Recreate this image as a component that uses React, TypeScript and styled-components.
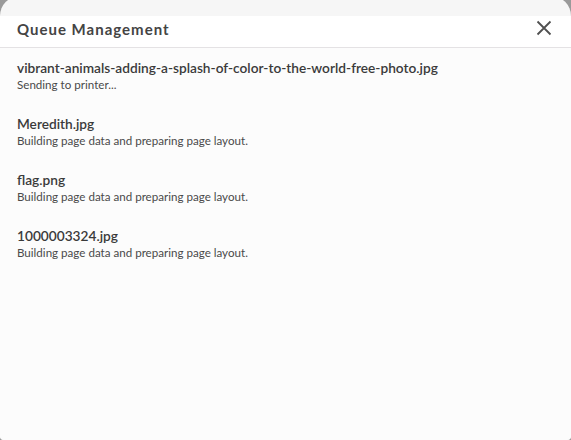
import React from "react";
import styled, { createGlobalStyle } from "styled-components";

const Global = createGlobalStyle`
  html, body { margin: 0; padding: 0; background: #9a9a9a; }
  body { font-family: "Lato", "Liberation Sans", sans-serif; overflow: hidden; }
`;

const Card = styled.div`
  margin-top: -4px;
  height: 444px;
  border-radius: 20px 20px 4px 4px;
  background: #f6f6f6;
  padding-top: 20px;
  box-sizing: border-box;
  display: flex;
  flex-direction: column;
  overflow: hidden;
`;

const Header = styled.div`
  height: 32px;
  box-sizing: border-box;
  background: #ffffff;
  border-bottom: 1px solid #e4e2e4;
  display: flex;
  align-items: center;
  justify-content: space-between;
  padding: 0 19px 8px 17px;
`;

const Title = styled.h1`
  margin: 2px 0 0;
  font-size: 15px;
  line-height: 18px;
  font-weight: 700;
  letter-spacing: 1px;
  color: #444444;
`;

const CloseButton = styled.button`
  border: none;
  background: none;
  padding: 0;
  width: 16px;
  height: 16px;
  display: flex;
  align-items: center;
  justify-content: center;
  cursor: pointer;
  color: #505050;
`;

const Body = styled.div`
  flex: 1;
  background: #fcfcfc;
  padding: 10px 17px;
  display: flex;
  flex-direction: column;
  gap: 21px;
`;

const Item = styled.div`
  display: flex;
  flex-direction: column;
`;

const FileName = styled.div`
  font-size: 13.7px;
  line-height: 19px;
  font-weight: 600;
  color: #3a3a3a;
`;

const Status = styled.div`
  font-size: 11.6px;
  line-height: 16px;
  color: #4a4a4a;
`;

const jobs = [
  { name: "vibrant-animals-adding-a-splash-of-color-to-the-world-free-photo.jpg", status: "Sending to printer..." },
  { name: "Meredith.jpg", status: "Building page data and preparing page layout." },
  { name: "flag.png", status: "Building page data and preparing page layout." },
  { name: "1000003324.jpg", status: "Building page data and preparing page layout." },
];

export default function App() {
  return (
    <>
      <Global />
      <Card>
        <Header>
          <Title>Queue Management</Title>
          <CloseButton aria-label="Close">
            <svg width="16" height="16" viewBox="0 0 16 16">
              <path d="M1.5 1.5 L14.5 14.5 M14.5 1.5 L1.5 14.5" stroke="currentColor" strokeWidth="1.8" fill="none" />
            </svg>
          </CloseButton>
        </Header>
        <Body>
          {jobs.map((j) => (
            <Item key={j.name}>
              <FileName>{j.name}</FileName>
              <Status>{j.status}</Status>
            </Item>
          ))}
        </Body>
      </Card>
    </>
  );
}
